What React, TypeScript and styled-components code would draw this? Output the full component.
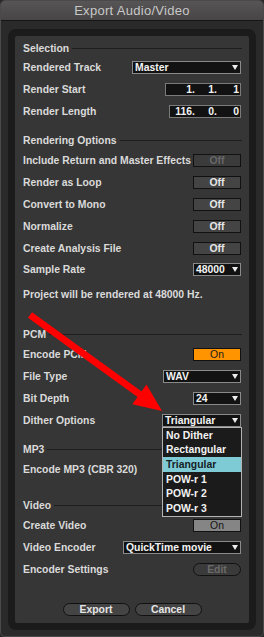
import React from 'react';
import styled, { createGlobalStyle } from 'styled-components';

const GlobalStyle = createGlobalStyle`
  html, body {
    margin: 0;
    padding: 0;
    background: #2a2a2a;
  }
  body {
    font-family: "Liberation Sans", Arial, sans-serif;
  }
`;

const LABEL = '#dadada';

const Window = styled.div`
  position: relative;
  width: 264px;
  height: 637px;
  box-sizing: border-box;
  display: flex;
  flex-direction: column;
  background: #2a2a2a;
  border: 1px solid #4a4a4a;
  border-radius: 5px;
  overflow: hidden;
`;

const TitleBar = styled.div`
  flex-shrink: 0;
  height: 19px;
  border-bottom: 1px solid #161616;
  background: linear-gradient(#575555, #474545);
  color: #c8c8c8;
  font-size: 13px;
  letter-spacing: 0.3px;
  display: flex;
  align-items: center;
  justify-content: center;
`;

const Body = styled.div`
  flex: 1;
  display: flex;
  padding: 8px 7px 6px;
`;

const Ring = styled.div`
  flex: 1;
  display: flex;
  background: #1b1b1b;
  border-radius: 8px;
  padding: 7px;
`;

const Panel = styled.div`
  flex: 1;
  display: flex;
  flex-direction: column;
  background: #363636;
  border-radius: 2px;
  padding: 3px 8px 0 8px;
  font-size: 10.4px;
  font-weight: bold;
  color: ${LABEL};
`;

const Heading = styled.div<{ $mt?: number }>`
  height: 18px;
  display: flex;
  align-items: center;
  gap: 3px;
  margin-top: ${({ $mt }) => $mt || 0}px;
  &::after {
    content: '';
    flex: 1;
    height: 1px;
    background: #1e1e1e;
    margin-right: -1px;
  }
`;

const Row = styled.div`
  height: 21.8px;
  display: flex;
  align-items: center;
  justify-content: space-between;
`;

const Info = styled.div`
  margin-top: 4px;
  height: 20px;
  display: flex;
  align-items: center;
`;

const Select = styled.div<{ $w: number }>`
  position: relative;
  box-sizing: border-box;
  width: ${({ $w }) => $w}px;
  height: 13px;
  background: #121212;
  border: 1px solid #8a8a8a;
  color: #f2f2f2;
  padding-left: 2px;
  display: flex;
  align-items: center;
  &::after {
    content: '';
    position: absolute;
    right: 2px;
    top: 3px;
    border-left: 3.5px solid transparent;
    border-right: 3.5px solid transparent;
    border-top: 5px solid #eeeeee;
  }
`;

const NumberBox = styled.div<{ $w: number }>`
  box-sizing: border-box;
  width: ${({ $w }) => $w}px;
  height: 13px;
  background: #121212;
  border: 1px solid #7a7a7a;
  color: #f2f2f2;
  display: flex;
  align-items: center;
  justify-content: flex-end;
  padding-right: 1px;
`;

const Seg = styled.span`
  min-width: 22px;
  text-align: right;
`;

type ToggleKind = 'off' | 'disabled' | 'on' | 'onGray';

const toggleBg: Record<ToggleKind, string> = {
  off: '#444444',
  disabled: '#3b3b3b',
  on: '#ff9400',
  onGray: '#858585',
};

const toggleFg: Record<ToggleKind, string> = {
  off: '#e6e6e6',
  disabled: '#686868',
  on: '#1a1a1a',
  onGray: '#141414',
};

const Toggle = styled.div<{ $kind: ToggleKind }>`
  box-sizing: border-box;
  width: 48px;
  height: 13px;
  border: 1px solid #111111;
  background: ${({ $kind }) => toggleBg[$kind]};
  color: ${({ $kind }) => toggleFg[$kind]};
  font-weight: ${({ $kind }) => ($kind === 'on' || $kind === 'onGray' ? 'normal' : 'bold')};
  display: flex;
  align-items: center;
  justify-content: center;
`;

const Pill = styled.div<{ $w: number; $disabled?: boolean }>`
  box-sizing: border-box;
  width: ${({ $w }) => $w}px;
  height: 13px;
  border: 1px solid #111111;
  border-radius: 7px;
  background: ${({ $disabled }) => ($disabled ? '#3a3a3a' : '#444444')};
  color: ${({ $disabled }) => ($disabled ? '#6a6a6a' : '#e6e6e6')};
  display: flex;
  align-items: center;
  justify-content: center;
`;

const ButtonBar = styled.div`
  margin-top: 22.6px;
  display: flex;
  justify-content: center;
  gap: 5px;
`;

const Popup = styled.div`
  position: absolute;
  left: -1px;
  top: 12px;
  width: 80px;
  box-sizing: border-box;
  background: #1b1b1b;
  border: 1px solid #b4b4b4;
  z-index: 2;
`;

const Item = styled.div<{ $active?: boolean }>`
  height: 14.7px;
  padding-left: 3px;
  display: flex;
  align-items: center;
  background: ${({ $active }) => ($active ? '#7ecbd6' : 'transparent')};
  color: ${({ $active }) => ($active ? '#152226' : '#f2f2f2')};
`;

const Arrow = styled.svg`
  position: absolute;
  left: -1px;
  top: -1px;
  pointer-events: none;
  z-index: 3;
`;

const ditherOptions = ['No Dither', 'Rectangular', 'Triangular', 'POW-r 1', 'POW-r 2', 'POW-r 3'];

const App = () => (
  <>
    <GlobalStyle />
    <Window>
      <TitleBar>Export Audio/Video</TitleBar>
      <Body>
        <Ring>
          <Panel>
            <Heading>Selection</Heading>
            <Row>
              Rendered Track
              <Select $w={109}>Master</Select>
            </Row>
            <Row>
              Render Start
              <NumberBox $w={76}>
                <Seg>1.</Seg>
                <Seg>1.</Seg>
                <Seg>1</Seg>
              </NumberBox>
            </Row>
            <Row>
              Render Length
              <NumberBox $w={72}>
                <Seg>116.</Seg>
                <Seg>0.</Seg>
                <Seg>0</Seg>
              </NumberBox>
            </Row>

            <Heading $mt={9.6}>Rendering Options</Heading>
            <Row>
              Include Return and Master Effects
              <Toggle $kind="disabled">Off</Toggle>
            </Row>
            <Row>
              Render as Loop
              <Toggle $kind="off">Off</Toggle>
            </Row>
            <Row>
              Convert to Mono
              <Toggle $kind="off">Off</Toggle>
            </Row>
            <Row>
              Normalize
              <Toggle $kind="off">Off</Toggle>
            </Row>
            <Row>
              Create Analysis File
              <Toggle $kind="off">Off</Toggle>
            </Row>
            <Row>
              Sample Rate
              <Select $w={48}>48000</Select>
            </Row>
            <Info>Project will be rendered at 48000 Hz.</Info>

            <Heading $mt={21.2}>PCM</Heading>
            <Row>
              Encode PCM
              <Toggle $kind="on">On</Toggle>
            </Row>
            <Row>
              File Type
              <Select $w={78}>WAV</Select>
            </Row>
            <Row>
              Bit Depth
              <Select $w={48}>24</Select>
            </Row>
            <Row>
              Dither Options
              <Select $w={79}>
                Triangular
                <Popup>
                  {ditherOptions.map((o) => (
                    <Item key={o} $active={o === 'Triangular'}>
                      {o}
                    </Item>
                  ))}
                </Popup>
              </Select>
            </Row>

            <Heading $mt={9.8}>MP3</Heading>
            <Row>Encode MP3 (CBR 320)</Row>

            <Heading $mt={16.2}>Video</Heading>
            <Row>
              Create Video
              <Toggle $kind="onGray">On</Toggle>
            </Row>
            <Row>
              Video Encoder
              <Select $w={118}>QuickTime movie</Select>
            </Row>
            <Row>
              Encoder Settings
              <Pill $w={48} $disabled>
                Edit
              </Pill>
            </Row>

            <ButtonBar>
              <Pill $w={67}>Export</Pill>
              <Pill $w={67}>Cancel</Pill>
            </ButtonBar>
          </Panel>
        </Ring>
      </Body>
      <Arrow width={264} height={637} viewBox="0 0 264 637">
        <line x1={30} y1={315} x2={142} y2={396} stroke="#ff0000" strokeWidth={7} />
        <polygon points="162,411 146.5,384.5 132.3,404.2" fill="#ff0000" />
      </Arrow>
    </Window>
  </>
);

export default App;
